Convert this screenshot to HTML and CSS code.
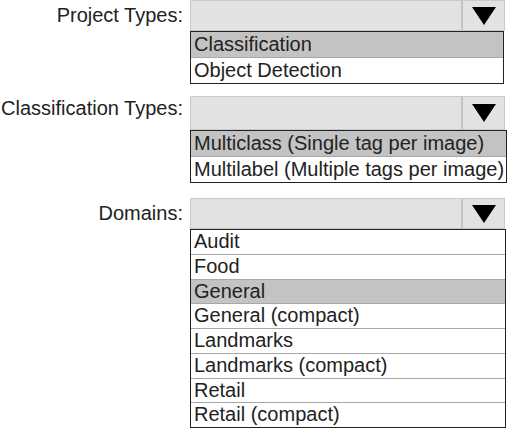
FILE: index.html
```html
<!DOCTYPE html>
<html>
<head>
<meta charset="utf-8">
<link rel="stylesheet" href="styles.css">
</head>
<body>
<div class="form">
  <div class="field field-project">
    <span class="label">Project Types:</span>
    <div class="select"><div class="value"></div><div class="btn"><svg width="24" height="18" viewBox="0 0 24 18"><polygon points="0,0 24,0 12,18" fill="#000"/></svg></div></div>
    <ul class="list list-project">
      <li class="sel">Classification</li>
      <li>Object Detection</li>
    </ul>
  </div>
  <div class="field field-class">
    <span class="label label-top">Classification Types:</span>
    <div class="select select-tall"><div class="value"></div><div class="btn"><svg width="24" height="18" viewBox="0 0 24 18"><polygon points="0,0 24,0 12,18" fill="#000"/></svg></div></div>
    <ul class="list list-class">
      <li class="sel">Multiclass (Single tag per image)</li>
      <li>Multilabel (Multiple tags per image)</li>
    </ul>
  </div>
  <div class="field field-domain">
    <span class="label">Domains:</span>
    <div class="select"><div class="value"></div><div class="btn"><svg width="24" height="18" viewBox="0 0 24 18"><polygon points="0,0 24,0 12,18" fill="#000"/></svg></div></div>
    <ul class="list list-domain">
      <li>Audit</li>
      <li>Food</li>
      <li class="sel">General</li>
      <li>General (compact)</li>
      <li>Landmarks</li>
      <li>Landmarks (compact)</li>
      <li>Retail</li>
      <li>Retail (compact)</li>
    </ul>
  </div>
</div>
</body>
</html>
```

FILE: styles.css
```css
html, body {
  margin: 0;
  padding: 0;
  background: #fff;
}
body {
  font-family: "Liberation Sans", Arial, sans-serif;
  font-size: 20px;
  color: #222;
}
.form {
  display: flex;
  flex-direction: column;
}
.field {
  display: grid;
  grid-template-columns: 190px auto;
  justify-content: start;
}
.field-class {
  margin-top: 12px;
}
.field-domain {
  margin-top: 15px;
}
.label {
  grid-column: 1;
  grid-row: 1;
  align-self: center;
  text-align: right;
  padding-right: 7px;
  white-space: nowrap;
}
.label-top {
  align-self: start;
  padding-top: 1px;
}
.select {
  grid-column: 2;
  grid-row: 1;
  width: 315px;
  height: 31px;
  box-sizing: border-box;
  display: flex;
  background: #e2e2e2;
  border: 1px solid #cacaca;
}
.select-tall {
  height: 34px;
}
.value {
  flex: 1;
  border-right: 2px solid #c4c4c4;
}
.btn {
  width: 41px;
  display: flex;
  align-items: center;
  justify-content: center;
}
.list {
  grid-column: 2;
  grid-row: 2;
  list-style: none;
  margin: 0;
  padding: 0;
  border: 1px solid #222;
  box-sizing: border-box;
}
.list li {
  height: 25px;
  line-height: 25px;
  padding-left: 3px;
  border-bottom: 1px solid #a8a8a8;
  white-space: nowrap;
}
.list li:last-child {
  border-bottom: none;
}
.list li.sel {
  background: #c3c3c3;
}
.list-project {
  width: 314px;
}
.list-class {
  width: 317px;
}
.list-domain {
  width: 316px;
}
.list-domain li {
  height: 23.75px;
  line-height: 23.75px;
}
```
